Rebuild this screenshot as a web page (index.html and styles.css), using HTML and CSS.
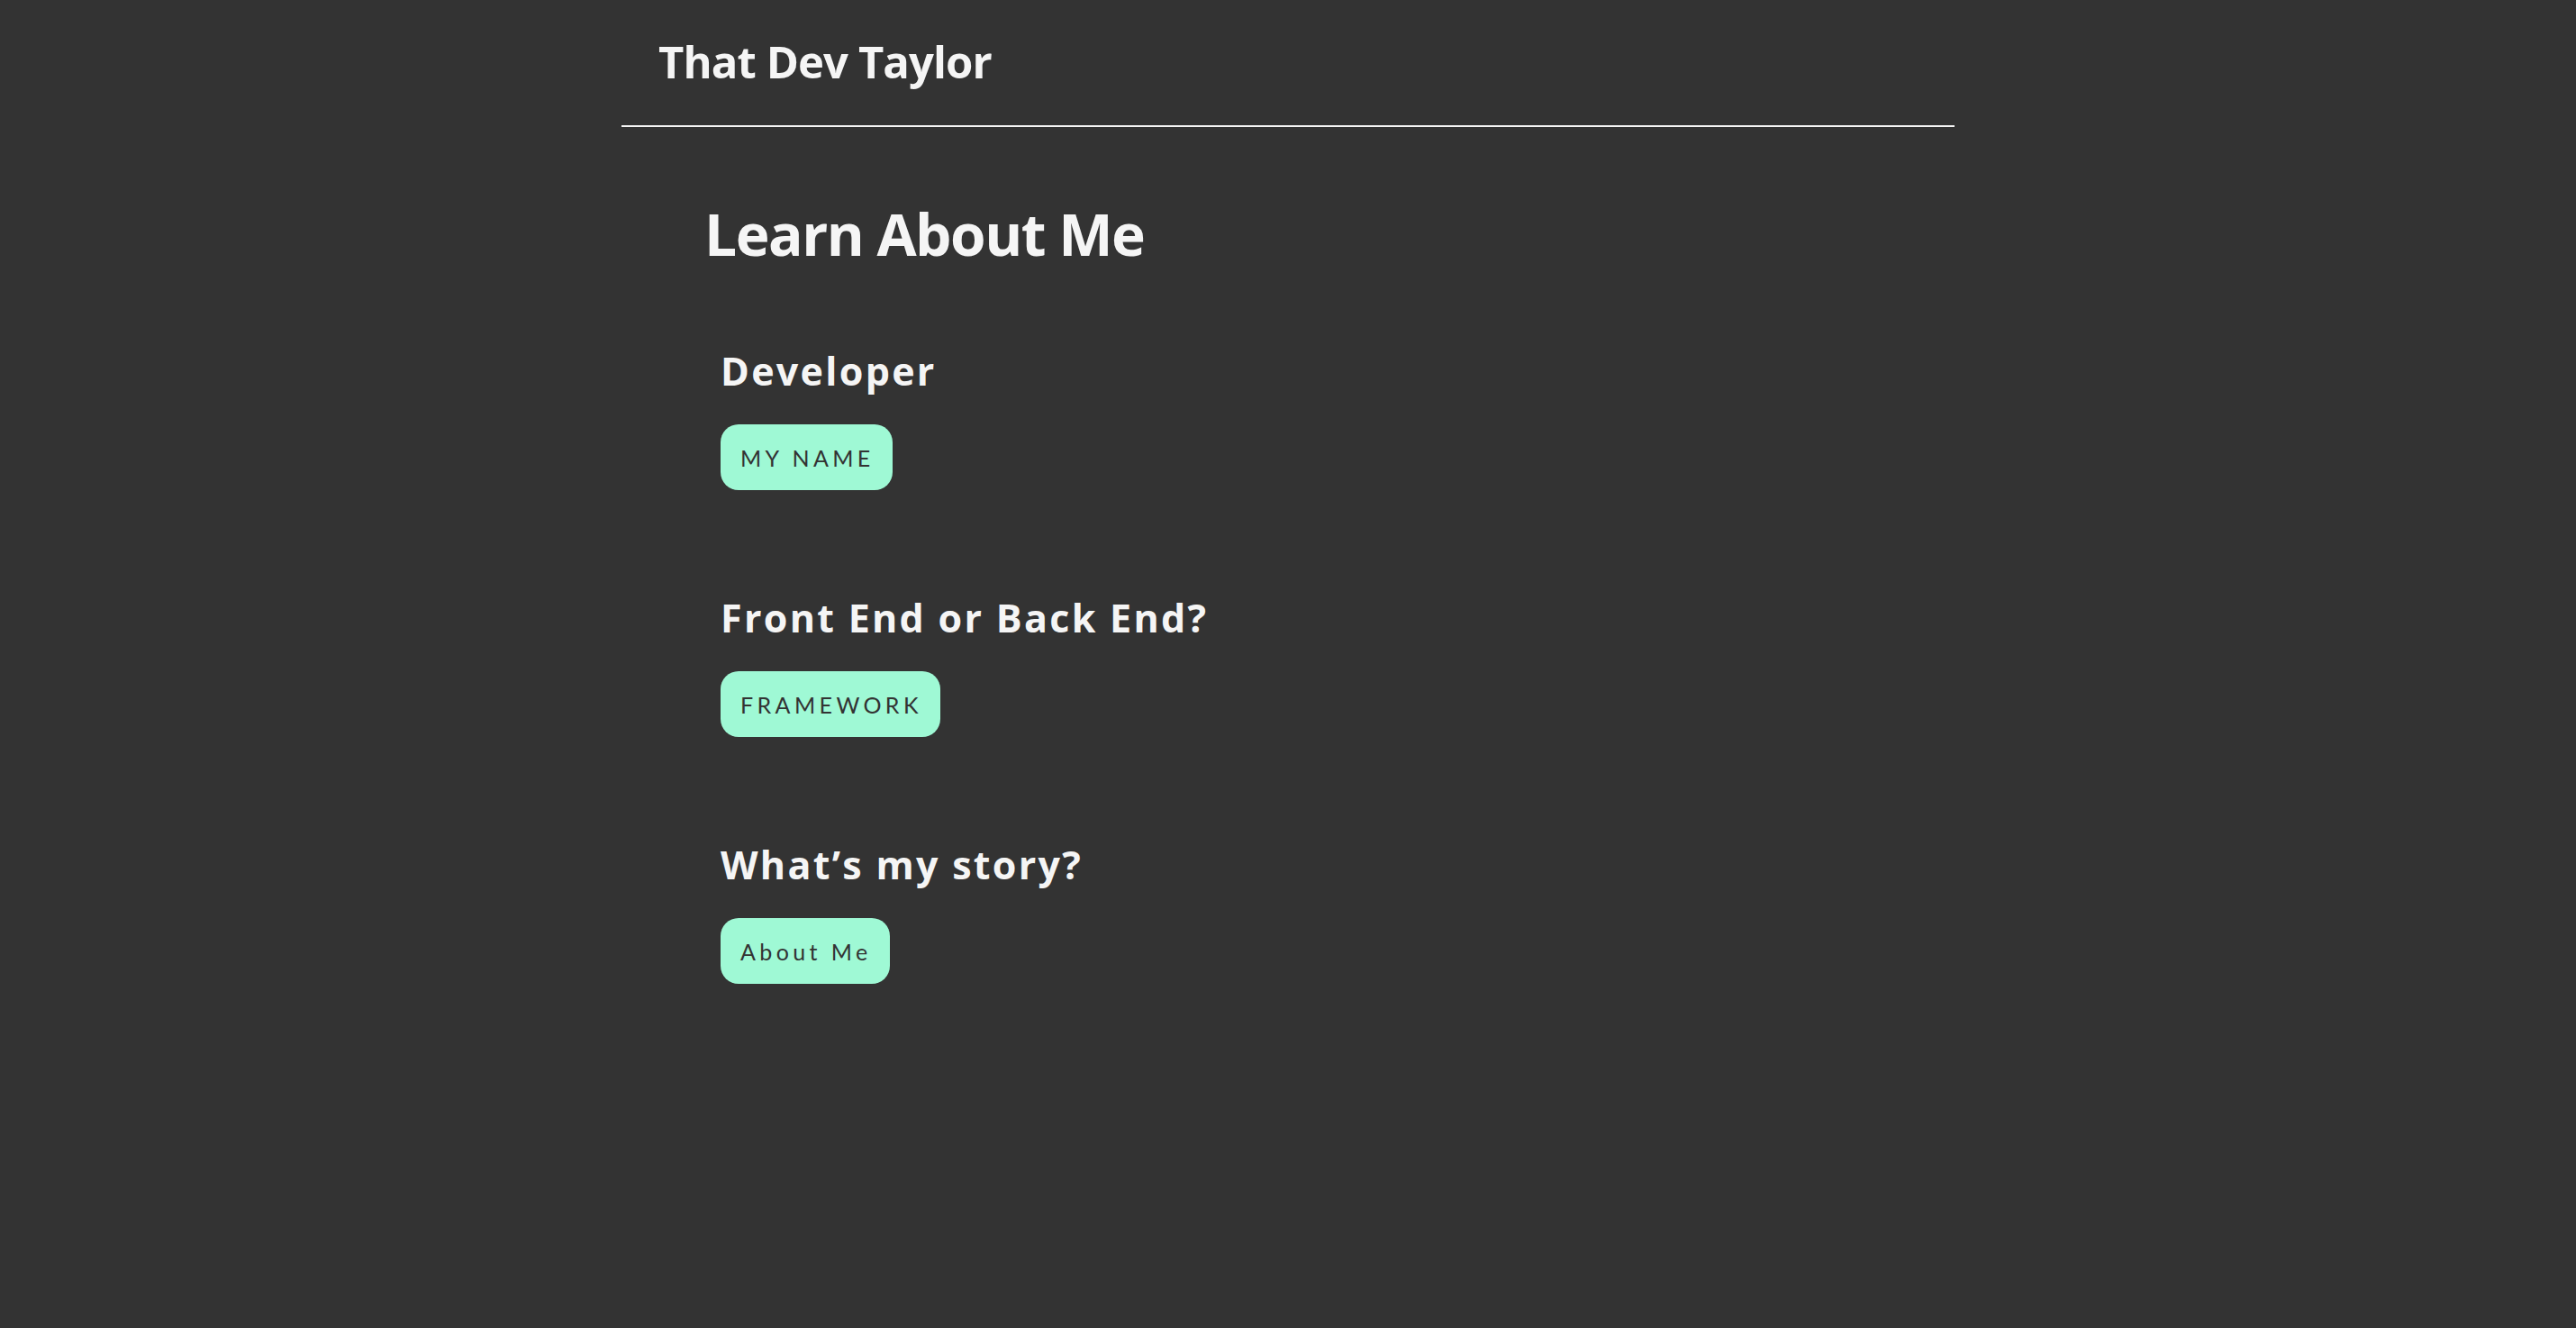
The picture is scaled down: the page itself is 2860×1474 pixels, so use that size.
FILE: index.html
```html
<!DOCTYPE html>
<html lang="en">
<head>
<meta charset="utf-8">
<title>That Dev Taylor</title>
<link rel="stylesheet" href="styles.css">
</head>
<body>
  <header class="site-header">
    <h1 class="brand">That Dev Taylor</h1>
  </header>
  <main class="content">
    <h2 class="page-title">Learn About Me</h2>
    <section class="item">
      <h3 class="item-title">Developer</h3>
      <a class="pill pill-caps" href="#">My Name</a>
    </section>
    <section class="item">
      <h3 class="item-title">Front End or Back End?</h3>
      <a class="pill pill-caps" href="#">Framework</a>
    </section>
    <section class="item">
      <h3 class="item-title">What’s my story?</h3>
      <a class="pill" href="#">About Me</a>
    </section>
  </main>
</body>
</html>
```
FILE: styles.css
```css
html, body {
  margin: 0;
  padding: 0;
  background: #333333;
  min-height: 100%;
}
body {
  font-family: Lato, "Noto Sans", "Liberation Sans", sans-serif;
  color: #f5f5f5;
}
.site-header {
  width: 1480px;
  margin: 0 auto;
  padding: 44px 0 46px 41px;
  box-sizing: border-box;
  border-bottom: 2px solid #f5f5f5;
}
.brand {
  margin: 0;
  font-family: "Open Sans", Lato, sans-serif;
  font-size: 49px;
  line-height: 1;
  font-weight: 700;
  letter-spacing: -0.9px;
}
.content {
  width: 1480px;
  margin: 0 auto;
  padding: 87px 0 0 92px;
  box-sizing: border-box;
}
.page-title {
  margin: 0 0 98px;
  font-family: "Open Sans", Lato, sans-serif;
  font-size: 64px;
  line-height: 1;
  font-weight: 700;
  letter-spacing: -1.5px;
}
.item {
  margin: 0 0 120px 18px;
  display: flex;
  flex-direction: column;
  align-items: flex-start;
  gap: 38px;
}
.item-title {
  margin: 0;
  font-family: "Open Sans", Lato, sans-serif;
  font-size: 43px;
  line-height: 1;
  font-weight: 700;
  letter-spacing: 2.3px;
}
.pill {
  display: inline-flex;
  align-items: center;
  height: 73px;
  padding: 0 20px 0 22px;
  box-sizing: border-box;
  background: #9ff9d5;
  color: #333333;
  border-radius: 20px;
  text-decoration: none;
  font-size: 25px;
  letter-spacing: 4.4px;
  font-weight: 400;
}
.pill-caps {
  text-transform: uppercase;
}
```
